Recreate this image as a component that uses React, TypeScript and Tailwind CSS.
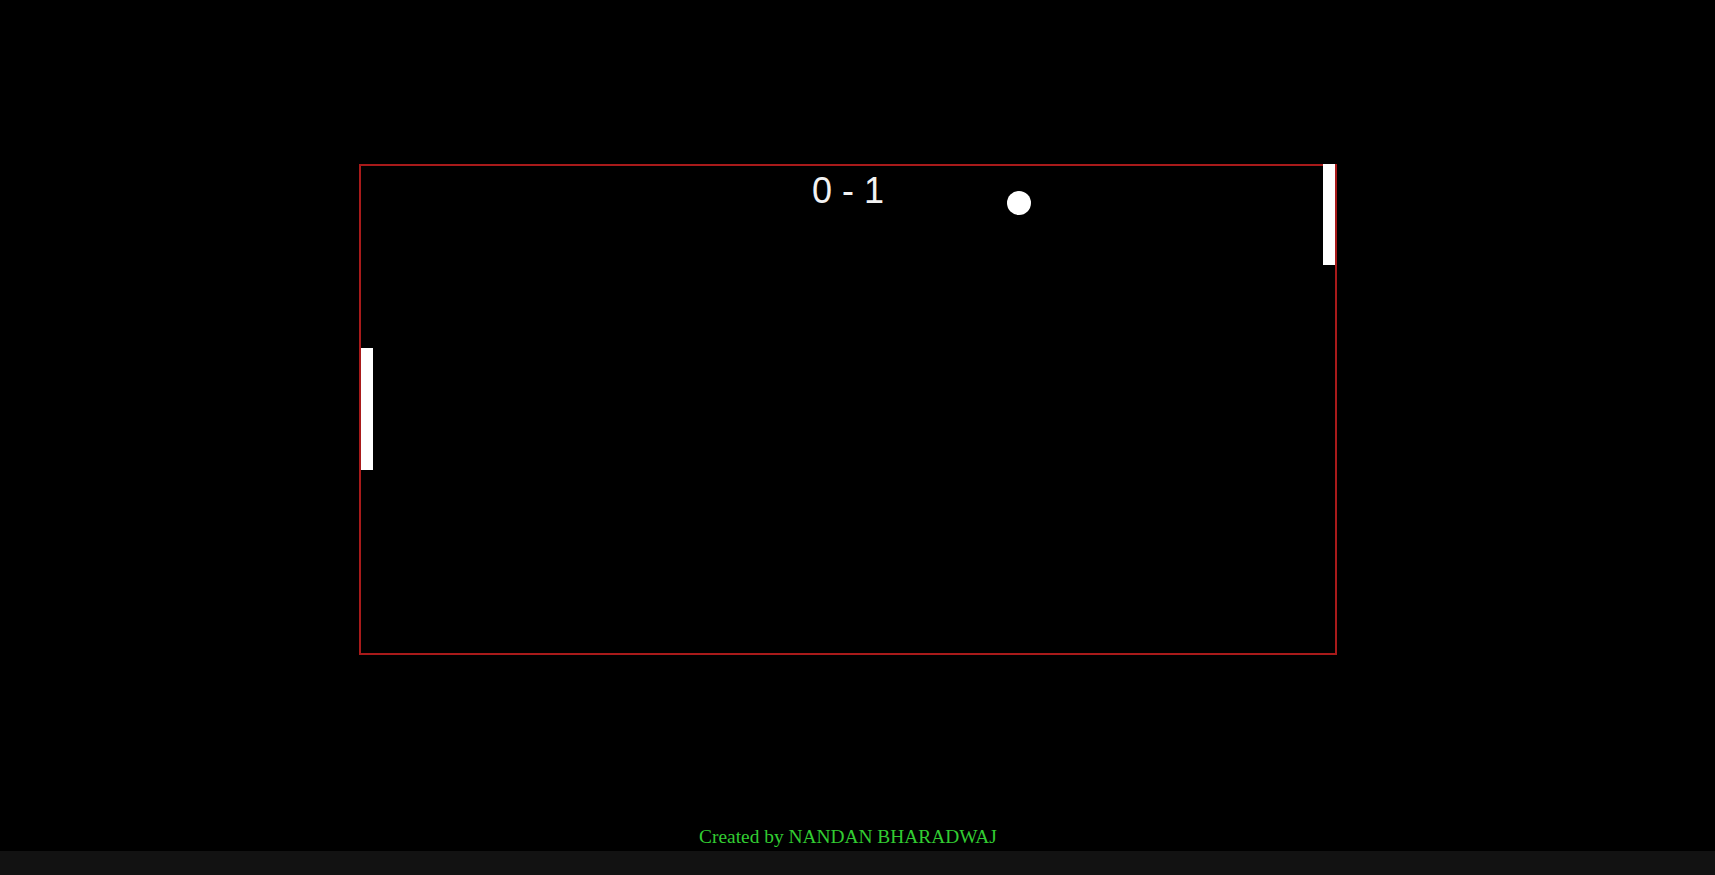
const App = () => {
  return (
    <div className="flex h-[875px] w-full flex-col bg-[#121212]">
      <div className="flex h-[851px] w-full bg-black">
        <main className="flex w-[1696px] flex-col items-center">
          <div className="relative mt-[164px] h-[491px] w-[978px] border-2 border-[#a81a1a]">
            <div className="pt-[4px] text-center text-[36px] leading-[41px] text-[#f2f2f2] [font-family:'Liberation_Sans',Arial,sans-serif]">
              0 - 1
            </div>
            <div className="absolute left-0 top-[182px] h-[122px] w-[12px] bg-white" />
            <div className="absolute right-0 top-[-2px] h-[101px] w-[12px] bg-white" />
            <div className="absolute left-[646px] top-[25px] h-[24px] w-[24px] rounded-full bg-white" />
          </div>
          <footer className="mt-auto text-[19.4px] text-[#32cd32] [font-family:'Liberation_Serif','Times_New_Roman',serif]">
            Created by NANDAN BHARADWAJ
          </footer>
        </main>
      </div>
    </div>
  );
};

export default App;
